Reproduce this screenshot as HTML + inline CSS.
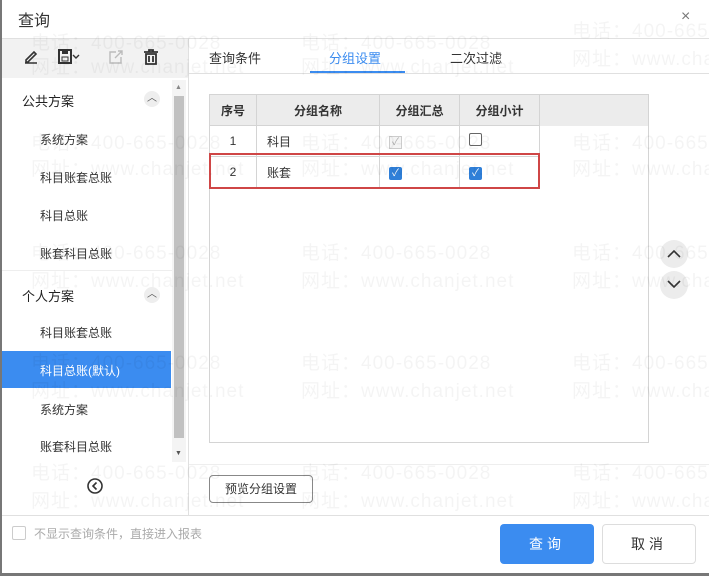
<!DOCTYPE html>
<html><head><meta charset="utf-8"><style>
*{margin:0;padding:0;box-sizing:border-box}
body{width:709px;height:576px;overflow:hidden;background:#fff;font-family:"Liberation Sans","Noto Sans CJK SC",sans-serif;font-size:12px;color:#333;position:relative}
.a{position:absolute}
.wm{position:absolute;color:rgba(0,0,0,0.045);font-size:19px;white-space:nowrap;letter-spacing:1px;pointer-events:none}
table{border-collapse:collapse;position:absolute;left:209px;top:94px}
td{border:1px solid #d4d4d4;height:31px;font-size:12px}
</style></head><body>
<div class="a" style="left:0;top:0;width:2px;height:576px;background:#777"></div>
<div class="a" style="left:0;top:573px;width:709px;height:3px;background:#777"></div>
<div class="a" style="left:18px;top:7px;font-size:16px;color:#333">查询</div>
<div class="a" style="left:681px;top:8px;font-size:16px;color:#777">×</div>
<div class="a" style="left:2px;top:38px;width:707px;height:1px;background:#e0e0e0"></div>
<div class="a" style="left:2px;top:39px;width:186px;height:39px;background:#f2f2f2"></div>
<svg class="a" style="left:20px;top:46px" width="150" height="22" viewBox="0 0 150 22">
<path d="M5 17h12M6 14l8-8 2 2-8 8H6z" stroke="#333" stroke-width="1.6" fill="none"/>
<rect x="39" y="4" width="12" height="13" stroke="#333" stroke-width="2" fill="none"/><rect x="42" y="4" width="6" height="4" fill="#333"/><rect x="42" y="11" width="6" height="4" stroke="#333" fill="none"/>
<path d="M53 9l3 3 3-3" stroke="#333" stroke-width="1.4" fill="none"/>
<path d="M96 6h-6v11h11v-6M95 12l7-7M98 5h4v4" stroke="#bbb" stroke-width="1.4" fill="none"/>
<path d="M124 6h14M129 6V4h4v2M126 8h10v10h-10zM129 10v6M133 10v6" stroke="#333" stroke-width="1.8" fill="none"/>
</svg>
<div class="a" style="left:188px;top:39px;width:1px;height:476px;background:#e0e0e0"></div>
<div class="a" style="left:22px;top:91px;font-size:13px;color:#222">公共方案</div>
<div class="a" style="left:144px;top:91px;width:16px;height:16px;border-radius:8px;background:#eee;font-size:10px;text-align:center;line-height:16px;color:#555">︿</div>
<div class="a" style="left:40px;top:131px">系统方案</div>
<div class="a" style="left:40px;top:169px">科目账套总账</div>
<div class="a" style="left:40px;top:207px">科目总账</div>
<div class="a" style="left:40px;top:245px">账套科目总账</div>
<div class="a" style="left:2px;top:270px;width:170px;height:1px;background:#eee"></div>
<div class="a" style="left:22px;top:286px;font-size:13px;color:#222">个人方案</div>
<div class="a" style="left:144px;top:287px;width:16px;height:16px;border-radius:8px;background:#eee;font-size:10px;text-align:center;line-height:16px;color:#555">︿</div>
<div class="a" style="left:40px;top:324px">科目账套总账</div>
<div class="a" style="left:2px;top:351px;width:169px;height:37px;background:#3b8cf0"></div>
<div class="a" style="left:40px;top:362px;color:#fff">科目总账(默认)</div>
<div class="a" style="left:40px;top:401px">系统方案</div>
<div class="a" style="left:40px;top:438px">账套科目总账</div>
<div class="a" style="left:172px;top:80px;width:14px;height:382px;background:#f4f4f4"></div>
<div class="a" style="left:174px;top:96px;width:10px;height:342px;background:#c1c1c1"></div>
<div class="a" style="left:175px;top:84px;font-size:7px;color:#888">▲</div>
<div class="a" style="left:175px;top:450px;font-size:7px;color:#555">▼</div>
<svg class="a" style="left:86px;top:477px" width="18" height="18"><circle cx="9" cy="9" r="7" stroke="#333" stroke-width="1.6" fill="none"/><path d="M10.5 5.5L7 9l3.5 3.5" stroke="#333" stroke-width="1.6" fill="none"/></svg>
<div class="a" style="left:209px;top:48px;font-size:13px">查询条件</div>
<div class="a" style="left:329px;top:48px;font-size:13px;color:#3b8cf0">分组设置</div>
<div class="a" style="left:310px;top:71px;width:95px;height:2px;background:#3b8cf0"></div>
<div class="a" style="left:450px;top:48px;font-size:13px">二次过滤</div>
<div class="a" style="left:189px;top:73px;width:520px;height:1px;background:#e0e0e0"></div>
<div class="a" style="left:209px;top:94px;width:440px;height:349px;border:1px solid #d4d4d4"></div>
<div class="a" style="left:210px;top:95px;width:438px;height:31px;background:#ececec"></div>
<table>
<tr style="font-weight:bold;text-align:center;background:#ececec"><td style="width:47px">序号</td><td style="width:123px">分组名称</td><td style="width:80px">分组汇总</td><td style="width:80px">分组小计</td></tr>
<tr><td style="text-align:center">1</td><td style="padding-left:10px">科目</td><td style="padding-left:9px"><span style="display:inline-block;width:13px;height:13px;border:1px solid #ccc;background:#f4f4f4;color:#aaa;font-size:10px;line-height:11px;text-align:center">✓</span></td><td style="padding-left:9px"><span style="display:inline-block;width:13px;height:13px;border:1px solid #666;border-radius:2px"></span></td></tr>
<tr><td style="text-align:center">2</td><td style="padding-left:10px">账套</td><td style="padding-left:9px"><span style="display:inline-block;width:13px;height:13px;background:#2f7fd8;border-radius:2px;color:#fff;font-size:10px;line-height:13px;text-align:center">✓</span></td><td style="padding-left:9px"><span style="display:inline-block;width:13px;height:13px;background:#2f7fd8;border-radius:2px;color:#fff;font-size:10px;line-height:13px;text-align:center">✓</span></td></tr>
</table>
<div class="a" style="left:209px;top:153px;width:331px;height:36px;border:2px solid #cf4646"></div>
<div class="a" style="left:660px;top:240px;width:28px;height:28px;border-radius:14px;background:#ececec"></div>
<div class="a" style="left:660px;top:271px;width:28px;height:28px;border-radius:14px;background:#ececec"></div>
<svg class="a" style="left:660px;top:240px" width="28" height="60"><path d="M8 17l6-6 6 6M8 41l6 6 6-6" stroke="#333" stroke-width="1.6" fill="none"/></svg>
<div class="a" style="left:189px;top:464px;width:520px;height:1px;background:#eee"></div>
<div class="a" style="left:209px;top:475px;width:104px;height:28px;border:1px solid #888;border-radius:4px;text-align:center;line-height:26px">预览分组设置</div>
<div class="a" style="left:2px;top:515px;width:707px;height:1px;background:#e0e0e0"></div>
<div class="a" style="left:12px;top:526px;width:14px;height:14px;border:1px solid #ccc;border-radius:2px"></div>
<div class="a" style="left:34px;top:525px;color:#aaa">不显示查询条件，直接进入报表</div>
<div class="a" style="left:500px;top:524px;width:94px;height:40px;background:#3b8cf0;border-radius:4px;color:#fff;font-size:14px;text-align:center;line-height:40px;letter-spacing:4px">查询</div>
<div class="a" style="left:602px;top:524px;width:94px;height:40px;border:1px solid #ddd;border-radius:4px;font-size:14px;text-align:center;line-height:38px;letter-spacing:4px">取消</div>
<div class="wm" style="left:31px;top:28px">电话：400-665-0028</div><div class="wm" style="left:301px;top:28px">电话：400-665-0028</div><div class="wm" style="left:572px;top:16px">电话：400-665-0028</div>
<div class="wm" style="left:31px;top:52px">网址：www.chanjet.net</div><div class="wm" style="left:301px;top:52px">网址：www.chanjet.net</div><div class="wm" style="left:572px;top:44px">网址：www.chanjet.net</div>
<div class="wm" style="left:31px;top:128px">电话：400-665-0028</div><div class="wm" style="left:301px;top:128px">电话：400-665-0028</div><div class="wm" style="left:572px;top:128px">电话：400-665-0028</div>
<div class="wm" style="left:31px;top:154px">网址：www.chanjet.net</div><div class="wm" style="left:301px;top:154px">网址：www.chanjet.net</div><div class="wm" style="left:572px;top:154px">网址：www.chanjet.net</div>
<div class="wm" style="left:31px;top:238px">电话：400-665-0028</div><div class="wm" style="left:301px;top:238px">电话：400-665-0028</div><div class="wm" style="left:572px;top:238px">电话：400-665-0028</div>
<div class="wm" style="left:31px;top:266px">网址：www.chanjet.net</div><div class="wm" style="left:301px;top:266px">网址：www.chanjet.net</div><div class="wm" style="left:572px;top:266px">网址：www.chanjet.net</div>
<div class="wm" style="left:31px;top:348px">电话：400-665-0028</div><div class="wm" style="left:301px;top:348px">电话：400-665-0028</div><div class="wm" style="left:572px;top:348px">电话：400-665-0028</div>
<div class="wm" style="left:31px;top:376px">网址：www.chanjet.net</div><div class="wm" style="left:301px;top:376px">网址：www.chanjet.net</div><div class="wm" style="left:572px;top:376px">网址：www.chanjet.net</div>
<div class="wm" style="left:31px;top:458px">电话：400-665-0028</div><div class="wm" style="left:301px;top:458px">电话：400-665-0028</div><div class="wm" style="left:572px;top:458px">电话：400-665-0028</div>
<div class="wm" style="left:31px;top:486px">网址：www.chanjet.net</div><div class="wm" style="left:301px;top:486px">网址：www.chanjet.net</div><div class="wm" style="left:572px;top:486px">网址：www.chanjet.net</div>
</body></html>
